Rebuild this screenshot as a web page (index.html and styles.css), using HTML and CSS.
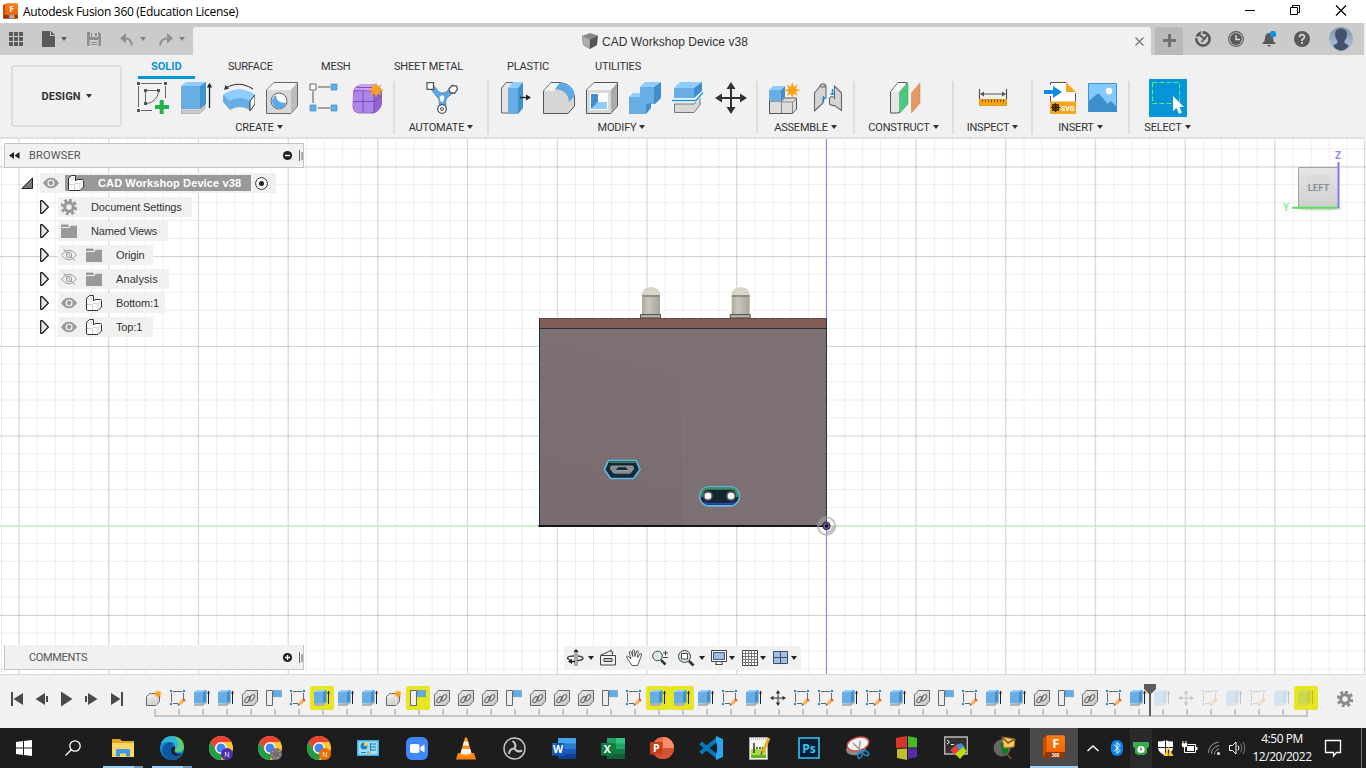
FILE: index.html
```html
<!DOCTYPE html>
<html lang="en">
<head>
<meta charset="utf-8">
<title>Autodesk Fusion 360 (Education License)</title>
<link rel="stylesheet" href="styles.css">
</head>
<body>
<svg class="defs" aria-hidden="true">
  <defs>
    <linearGradient id="led" x1="0" x2="1" y1="0" y2="0"><stop offset="0" stop-color="#aaa89f"/><stop offset=".35" stop-color="#c8c6bd"/><stop offset="1" stop-color="#a5a39b"/></linearGradient>
    <linearGradient id="gray" x1="0" x2="1" y1="0" y2="1"><stop offset="0" stop-color="#f0f0f0"/><stop offset="1" stop-color="#c4c4c4"/></linearGradient>
    <linearGradient id="wall" x1="0" x2=".2" y1="1" y2="0"><stop offset="0" stop-color="#796c71"/><stop offset="1" stop-color="#7d7072"/></linearGradient>
    <linearGradient id="cube" x1="0" x2="0" y1="0" y2="1"><stop offset="0" stop-color="#e6e6e6"/><stop offset="1" stop-color="#cfcfcf"/></linearGradient>
    <linearGradient id="fus" x1="0" x2="0" y1="0" y2="1"><stop offset="0" stop-color="#ff7a16"/><stop offset="1" stop-color="#f36400"/></linearGradient>
    <linearGradient id="ava" x1="0" x2="0" y1="0" y2="1"><stop offset="0" stop-color="#8295aa"/><stop offset="1" stop-color="#b0c8e8"/></linearGradient>
  </defs>

  <symbol id="star" viewBox="0 0 16 16"><path fill="#f9a11b" d="M8 0l1.500 4.500L13.600 2.400 11.500 6.500 16 8l-4.500 1.500 2.100 4.100-4.100-2.100L8 16l-1.500-4.500-4.100 2.100 2.100-4.100L0 8l4.500-1.500-2.100-4.100 4.100 2.100z"/></symbol>

  <symbol id="extrude" viewBox="0 0 32 32">
    <path fill="#ccc" stroke="#999" stroke-width=".6" d="M1.500 28h18L25 22.500V27l-5.500 4.500h-18z"/>
    <path fill="#68aee4" d="M1 4h19v23H1z"/><path fill="#8dcdff" d="M1 4l5-4h20l-6 4z"/><path fill="#3f92cf" d="M20 4l6-4v22l-6 5z"/>
    <path d="M29.500 4v22" stroke="#222" stroke-width="1.300"/><path fill="#222" d="M26.800 5.500l2.700-4.700 2.700 4.700z"/>
  </symbol>
  <symbol id="extrude-s" viewBox="0 0 16 16">
    <path fill="#bbb" stroke="#999" stroke-width=".5" d="M.5 14H9l3.500-3v1.700L9 15.700H.5z"/>
    <path fill="#68aee4" d="M0 2h9v11.500H0z"/><path fill="#8dcdff" d="M0 2l3-2h10L9 2z"/><path fill="#3f92cf" d="M9 2l3.500-2v11L9 13.500z"/>
    <path d="M14.500 2v12" stroke="#222"/><path fill="#222" d="M13 3.500l1.500-3 1.500 3z"/>
  </symbol>
  <symbol id="sketch" viewBox="0 0 16 16">
    <path d="M3 1.500h9M1.500 3v9M13.500 3v6M3 13.500h5" fill="none" stroke="#666"/>
    <path fill="#1184e8" d="M0 0h2v2H0zM13 0h2v2h-2zM0 13h2v2H0z"/>
    <path d="M9.300 14.200l4.200-4" stroke="#f5b04a" stroke-width="3"/><path d="M13.200 10.700L14.800 9.200" stroke="#ef5350" stroke-width="3"/><path fill="#555" d="M7.500 15.800l.8-2.400 1.700 1.600z"/>
  </symbol>
  <symbol id="link" viewBox="0 0 16 16">
    <path fill="url(#gray)" stroke="#666" d="M.5 5l4-4.500h11v10.500l-4 4.500H.5z"/>
    <g fill="none" stroke="#666" stroke-width="1.100"><ellipse cx="5.500" cy="9.500" rx="1.900" ry="3.700" transform="rotate(38 5.500 9.500)"/><ellipse cx="9.800" cy="7.800" rx="1.900" ry="3.700" transform="rotate(38 9.800 7.800)"/></g>
  </symbol>
  <symbol id="flange" viewBox="0 0 16 16"><path fill="#eee" stroke="#666" d="M.5.5h6v15h-6z"/><path fill="#61ade6" stroke="#418fc7" stroke-width=".5" d="M7 .5h8.700v6.200H7z"/></symbol>
  <symbol id="newc" viewBox="0 0 16 16"><path fill="url(#gray)" stroke="#666" d="M.5 8q0-2 2-3.500 1-1 3-1h8v8l-3.500 4H.5z"/><path fill="none" stroke="#fff" stroke-width=".7" d="M1 7h9v8M10 7l3-3"/><use href="#star" x="7.500" y="-.5" width="9" height="9"/></symbol>
  <symbol id="move" viewBox="0 0 32 32"><path d="M16 4v24M4 16h24" stroke="#333" stroke-width="2"/><path fill="#333" d="M16 0l4.500 7h-9zM16 32l4.500-7h-9zM0 16l7-4.500v9zM32 16l-7-4.500v9z"/></symbol>
  <symbol id="comp" viewBox="0 0 16 16"><path fill="#fafafa" stroke="#333" stroke-linejoin="round" d="M.5 14.500V3.500l3-3h4V6L9 4.500h5.500q1 0 1 1V12L12 15.500H1.500q-1 0-1-1z"/><path fill="none" stroke="#c4c4c4" stroke-width=".7" d="M1 9.500h5.500M6.500 9v6M7 8.500h5l3-3M12 8.500V15M1 4h4l2-2.500"/></symbol>
  <symbol id="folder" viewBox="0 0 16 14"><path fill="#999" d="M0 .5h7L8.500 3H0zM0 4h8.500l1-2.300H16V14H0z"/></symbol>
  <symbol id="eye" viewBox="0 0 16 12"><path fill="#999" d="M0 6Q3.500.7 8 .7T16 6q-3.500 5.300-8 5.300T0 6z"/><circle cx="8" cy="6" r="3.600" fill="#eee"/><circle cx="8" cy="6" r="2.200" fill="#999"/></symbol>
  <symbol id="eyeoff" viewBox="0 0 16 12"><g fill="none" stroke="#999"><path d="M.5 6Q4 1.200 8 1.200T15.500 6Q12 10.800 8 10.800T.5 6z"/><circle cx="8" cy="6" r="2.600"/><path d="M2.500 0l11.500 12"/></g></symbol>
  <symbol id="gear" viewBox="0 0 16 16"><path fill="none" stroke="currentColor" stroke-width="3.200" stroke-dasharray="2.900 2.440" d="M8 1.200a6.800 6.800 0 1 1-.01 0z"/><circle cx="8" cy="8" r="4.300" fill="none" stroke="currentColor" stroke-width="3.200"/></symbol>
  <symbol id="tri" viewBox="0 0 9 14"><path fill="#e8e8e8" stroke="#222" stroke-width="1.300" stroke-linejoin="round" d="M.7.7h1.600L8.400 7l-6.100 6.300H.7z"/></symbol>
  <symbol id="fusion" viewBox="0 0 22 24"><path fill="#c74b00" d="M0 3l4-2v18l-4 4z"/><path fill="url(#fus)" d="M3.500 1Q4 .3 5 .3h15.500q1.500 0 1.500 1.500V17H3.500z"/><path fill="#8b3905" d="M3 17h19v4q0 2-1.500 2H0z"/><text x="12.800" y="13.300" font-size="13" font-weight="700" fill="#fff" text-anchor="middle">F</text><text x="12.500" y="21.500" font-size="4.500" font-weight="700" fill="#fff" text-anchor="middle">360</text></symbol>
  <symbol id="chrome" viewBox="0 0 24 24"><circle cx="12" cy="12" r="12" fill="#fcc934"/><path fill="#ea4335" d="M1.600 6A12 12 0 0 1 22.400 6H12a6 6 0 0 0-5.200 9z"/><path fill="#1e9e4a" d="M1.600 6l5.200 9A6 6 0 0 0 14 17.700L12 24A12 12 0 0 1 1.600 6z"/><circle cx="12" cy="12" r="5.800" fill="#fff"/><circle cx="12" cy="12" r="4.500" fill="#4285f4"/></symbol>
</svg>

<header class="titlebar">
  <svg class="applogo" viewBox="0 0 22 25"><use href="#fusion" width="22" height="24"/></svg>
  <span class="apptitle">Autodesk Fusion 360 (Education License)</span>
  <svg class="winbtns" viewBox="0 0 110 20" fill="none" stroke="#000"><path d="M5 10.500h10"/><path d="M50.500 7.500h7v7h-7zM52.500 7.500v-2h7v7h-2"/><path d="M96 5.500l10 10M106 5.500l-10 10" stroke-width="1.200"/></svg>
</header>

<div class="tabbar">
  <div class="quick">
    <svg width="14" height="14" viewBox="0 0 14 14" fill="#595959"><path d="M0 0h4v4H0zM5 0h4v4H5zM10 0h4v4h-4zM0 5h4v4H0zM5 5h4v4H5zM10 5h4v4h-4zM0 10h4v4H0zM5 10h4v4H5zM10 10h4v4h-4z"/></svg>
    <svg class="q-file" width="13" height="16" viewBox="0 0 13 16" fill="#595959"><path d="M0 0h8v5h5v11H0zM9 0l4 4H9z"/></svg><i class="caret c1"></i>
    <svg class="q-save" width="14" height="14" viewBox="0 0 14 14"><path fill="#8f8f8f" d="M0 0h12l2 2v12H0z"/><path fill="#ccc" d="M3 0h8v5H3zM2.500 8h9v6h-9z"/><path fill="#8f8f8f" d="M8 1h2v3H8zM4 10h6v1H4zM4 12h6v1H4zM4 1h1v4H4z"/></svg>
    <svg class="q-undo" width="14" height="13" viewBox="0 0 14 13"><path fill="none" stroke="#8f8f8f" stroke-width="2" d="M3 5.300Q11.500 4.500 11.800 12.500"/><path fill="#8f8f8f" d="M0 5.200L6 0v10.500z"/></svg><i class="caret c2"></i>
    <svg class="q-redo" width="14" height="13" viewBox="0 0 14 13"><path fill="none" stroke="#8f8f8f" stroke-width="2" d="M11 5.300Q1.500 4.500 1.200 12.500"/><path fill="#8f8f8f" d="M14 5.200L8 0v10.500z"/></svg><i class="caret c2"></i>
  </div>
  <div class="doctab">
    <svg width="16" height="16" viewBox="0 0 16 16"><path fill="#888" d="M0 3L8 0l8 2.500L8 6z"/><path fill="#b0b0b0" stroke="#777" stroke-width=".6" d="M.3 3.200L8 6v9.700L1.500 12z"/><path fill="#555" d="M16 2.500L8 6v10l7-4z"/></svg>
    <span>CAD Workshop Device v38</span>
    <svg class="tabclose" width="9" height="9" viewBox="0 0 9 9"><path d="M.5.500l8 8M8.500.5l-8 8" stroke="#777" stroke-width="1.300"/></svg>
  </div>
  <div class="plus"><svg width="13" height="13" viewBox="0 0 13 13"><path d="M6.500 0v13M0 6.500h13" stroke="#707070" stroke-width="3"/></svg></div>
  <div class="status">
    <svg width="16" height="16" viewBox="0 0 16 16"><circle cx="8" cy="8" r="6.600" fill="none" stroke="#595959" stroke-width="2.600"/><path d="M0 5.500l5 2.500M7 0L6 5" stroke="#cbcbcb" stroke-width="1.500"/><path d="M4 3.500L9.500 8 12 4.500M9.500 7.500L6.500 11" fill="none" stroke="#595959" stroke-width="1.800"/></svg>
    <svg width="16" height="16" viewBox="0 0 16 16"><circle cx="8" cy="8" r="7.400" fill="none" stroke="#595959" stroke-width="1.100"/><circle cx="8" cy="8" r="5.900" fill="#595959"/><path d="M8 4v4.500h4" fill="none" stroke="#ddd" stroke-width="1.400"/></svg>
    <svg width="16" height="16" viewBox="0 0 16 16"><path fill="#595959" d="M2 12q2-1.500 2-5 0-4.500 4-5 4 .5 4 5 0 3.500 2 5zM1.500 11.500h13V13h-13zM6 14h4l-2 2z"/><circle cx="12" cy="3" r="3.200" fill="#0a96dc"/></svg>
    <svg width="16" height="16" viewBox="0 0 16 16"><circle cx="8" cy="8" r="8" fill="#595959"/><path d="M5.500 6.300Q5.700 3.700 8 3.700t2.400 2.200Q10.400 7.300 8 8.700V10M8 11v2" fill="none" stroke="#d5d5d5" stroke-width="1.800"/></svg>
  </div>
  <svg class="avatar" width="24" height="24" viewBox="0 0 24 24"><circle cx="12" cy="12" r="12" fill="url(#ava)"/><path fill="#44536a" d="M12 1.500q6 .5 6 6 0 4-2.500 6.500v2l4.500 2.500q-3 5-8 5.200-5-.2-8-5.200L8.500 16v-2Q6 11.500 6 7.500q0-5.500 6-6z"/></svg>
</div>

<section class="ribbon">
  <div class="design">DESIGN<i class="caret"></i></div>
  <div class="tools">
    <nav class="tabs"><span class="on t1">SOLID</span><span class="t2">SURFACE</span><span class="t3">MESH</span><span class="t4">SHEET METAL</span><span class="t5">PLASTIC</span><span>UTILITIES</span></nav>
    <div class="groups">
      <div class="group g-create"><div class="icons">
        <svg viewBox="0 0 32 32"><path d="M4 1.500h21M1.500 4v21M28.500 4v12M4 28.500h11" stroke="#666"/><path fill="#555" d="M0 0h3v3H0zM27 0h3v3h-3zM0 27h3v3H0zM7 7h3v3H7zM20 7h3v3h-3zM7 20h3v3H7z"/><path d="M8.500 10v10M10 8.500h10M21.500 10q-1 9-12 12" fill="none" stroke="#666"/><path d="M24.700 18v14M18 25h14" stroke="#22b14c" stroke-width="4"/></svg>
        <svg viewBox="0 0 32 32"><use href="#extrude"/></svg>
        <svg viewBox="0 0 32 32"><path fill="#68aee4" d="M0 13Q16 2 32 13v8q0 0-5 7-11-6-20 0l-7-8z"/><path fill="#8dcdff" d="M0 13Q16 2 32 13l-5 6q-11-6-20 0z"/><path d="M27 19l5-6v9l-5 7z" fill="#fff" stroke="#333"/><path d="M3 6Q16-2 30 7" fill="none" stroke="#333" stroke-width="1.200"/><path fill="#333" d="M1 8l1.500-5L6 6.500z"/></svg>
        <svg viewBox="0 0 32 32"><path fill="#d9d9d9" stroke="#666" d="M.5 8L8 .500h23.500V24L25 31.500H.5z"/><path fill="#f4f4f4" d="M1 8l7-7h23l-6 7z"/><path fill="#bbb" d="M25 8l6-7v23l-6 7z"/><circle cx="13" cy="19" r="8" fill="#fff" stroke="#666"/><path fill="#5ca9e6" d="M10 13q0 8 10 8-1 5.500-7 5.500-6.500-.5-7-7 0-4 4-6.500z"/></svg>
        <svg viewBox="0 0 32 32"><path d="M9 5h12M4 9v12M9 26h12" stroke="#555"/><path fill="#fff" stroke="#666" d="M1 2h6v6H1z"/><path fill="#62aee8" stroke="#3f8ec8" stroke-width=".7" d="M22 2h6v6h-6zM1 23h6v6H1zM22 23h6v6h-6z"/></svg>
        <svg viewBox="0 0 32 32"><path fill="#9362cf" d="M1 10q1-7 10-8h10q8 1 9 8v12q-1 6-8 9.500H7q-6-1-6.500-7z"/><path fill="#c9a4f7" d="M2 8q4-5 9-6h9q5 1 6 3l-5 4q-10-2-19-1z"/><path fill="#ad85e6" d="M1.500 10.500Q11 7 21.500 10.500q1.500 9 0 19.500-10 2-19 0-2.500-10-1-19.500z"/><path d="M11 9v22M1 19.500h21l8-6M5 5.500h20M22 10v20" fill="none" stroke="#7049a9" stroke-width=".9"/><use href="#star" x="16" y="0" width="16" height="16"/></svg>
      </div><div class="label">CREATE<i class="caret"></i></div></div>
      <div class="group g-auto"><div class="icons">
        <svg viewBox="0 0 32 32"><path fill="#5da8e2" stroke="#35729f" stroke-width=".6" d="M4 6l4-2 5 6q3 2 7 0l5-5 3 5-6 5q-3 2-2 10l-2 3h-3l-2-3q1-8-2-10z"/><path d="M16 13l-2.500 2 1.500 5h2l1.500-5z" fill="#fff"/><path fill="#fff" stroke="#555" stroke-width="1.300" d="M1 .7h6.500v6.600H1zM26 3.500l4.500.5 1 3-3 4.500-4.500-1-1-3.500z"/><circle cx="16" cy="27" r="4.300" fill="#fff" stroke="#555" stroke-width="1.300"/><circle cx="16" cy="27" r="1.500" fill="none" stroke="#444"/></svg>
      </div><div class="label">AUTOMATE<i class="caret"></i></div></div>
      <div class="group g-modify"><div class="icons">
        <svg viewBox="0 0 32 32"><path fill="#e4e4e4" stroke="#666" d="M1.500 31V6L6 .5h9V26l-5 5z"/><path fill="#68aee4" d="M8 6h10v26H8z"/><path fill="#8dcdff" d="M8 6l5-6h10l-5 6z"/><path fill="#3f92cf" d="M18 6l5-6v26l-5 6z"/><path d="M20 15.500h7" stroke="#222" stroke-width="1.400"/><path fill="#222" d="M26 12.500l5 3-5 3z"/></svg>
        <svg viewBox="0 0 32 32"><path fill="#d6d6d6" stroke="#555" d="M.5 31.500V9L8 .5h9Q30 2 31.500 15v9L25 31.500z"/><path fill="#f2f2f2" d="M1 9l7-8h9l-6 8z"/><path fill="#5da9e4" d="M12 7l5-6.500Q31 2 31.500 14L26 20Q25 8 12 7z"/></svg>
        <svg viewBox="0 0 32 32"><path fill="#d9d9d9" stroke="#555" d="M.5 8L8 .500h23.500V24L25 31.500H.5z"/><path fill="#f4f4f4" d="M1 8l7-7h23l-6 7z"/><path fill="#aaa" d="M25 8l6-7v23l-6 7z"/><path fill="#fff" d="M4 11h18v17H4z"/><path fill="#8dcdff" d="M5 27l7-7h9v7z"/><path fill="#3f8ecb" d="M5 12h7v8l-7 7z"/></svg>
        <svg viewBox="0 0 32 32"><path fill="#68aee4" d="M0 15h11V5h14v17h-8v10H0z"/><path fill="#8dcdff" d="M0 15l4-4h7v4zM11 5l5-5h16l-7 5z"/><path fill="#3f8ecb" d="M25 5l7-5v16l-6 6h-8l4-1v5l-5 6V22h8z"/></svg>
        <svg viewBox="0 0 32 32"><path fill="#68aee4" d="M2 6h20v10H2z"/><path fill="#8dcdff" d="M2 6l6-6h22l-8 6z"/><path fill="#3f8ecb" d="M22 6l8-6v9l-8 7z"/><path fill="#d8d8d8" stroke="#777" d="M2.500 22H22l6-6v7l-6 7.500H2.500z"/><path d="M0 18.500h24l7-8" fill="none" stroke="#fff" stroke-width="3"/><path d="M0 18.500h24l7-8" fill="none" stroke="#0f93e6" stroke-width="1.400"/></svg>
        <svg viewBox="0 0 32 32"><use href="#move"/></svg>
      </div><div class="label">MODIFY<i class="caret"></i></div></div>
      <div class="group g-asm"><div class="icons">
        <svg viewBox="0 0 32 32"><path fill="#ddd" stroke="#555" d="M.5 19h12l3-3h12v11l-4 4.500H.5z"/><path d="M12.500 19v12M23.500 20v11M13 20h11l4-4" stroke="#888" fill="none"/><path fill="#68aee4" d="M0 8h12v11H0z"/><path fill="#8dcdff" d="M0 8l4-4h12l-4 4z"/><path fill="#3f8ecb" d="M12 8l4-4v11l-4 4z"/><use href="#star" x="15" y="0" width="16.500" height="16.500"/></svg>
        <svg viewBox="0 0 32 32"><g fill="#d4d4d4" stroke="#666" stroke-width="1.100"><path d="M2.500 11L8 4q4-4 6 0v12l-3 1v4L2.500 29z"/><path d="M29.500 11L22.500 4v12q-3-3-5 0v6q2 2 5 1.500l7 5z"/><ellipse cx="11" cy="3.500" rx="2.500" ry="1.500"/></g><path d="M11.500 14v6M20.500 7v6M18.500 12h4" stroke="#118ce6" stroke-width="1.400"/></svg>
      </div><div class="label">ASSEMBLE<i class="caret"></i></div></div>
      <div class="group g-con"><div class="icons">
        <svg viewBox="0 0 32 32"><path fill="#e6e6e6" stroke="#555" d="M1.500 31V10L9 .5h8.500V22L9 31z"/><path fill="#f7f7f7" d="M2 10l7-9h8l-7 9z"/><path fill="#4fc57e" stroke="#37a965" stroke-width=".5" d="M10.500 31.500V10L19 .5V22z"/><path fill="#e69763" stroke="#ca7b49" stroke-width=".5" d="M22.500 31V11L31 1v20z"/></svg>
      </div><div class="label">CONSTRUCT<i class="caret"></i></div></div>
      <div class="group g-ins"><div class="icons">
        <svg viewBox="0 0 32 32"><path d="M2.500 7v10M29.500 7v10M5 12h22" stroke="#555" stroke-width="1.200"/><path fill="#555" d="M3 12l4-2.500v5zM29 12l-4-2.500v5z"/><path fill="#fba300" stroke="#d98a00" stroke-width=".7" d="M2.500 17.500h27v6h-27z"/><path d="M5.500 17.500v2.500M8.500 17.500v2.500M11.500 17.500v2.500M14.500 17.500v3M17.500 17.500v2.500M20.500 17.500v2.500M23.500 17.500v2.500M26.500 17.500v3" stroke="#7c4f00"/></svg>
      </div><div class="label">INSPECT<i class="caret"></i></div></div>
      <div class="group g-insert"><div class="icons">
        <svg viewBox="0 0 32 32"><path fill="#fff" d="M6 0h16l10 10v10H6z"/><path d="M6.500 3V.500H22M6.500 14v6M31.500 11v9" fill="none" stroke="#555"/><path fill="#f5a81f" d="M22 0l10 10H22zM6 19.500h26V32H6z"/><path fill="#128be6" d="M0 8h9V4l9 6-9 6v-4H0z"/><circle cx="11.500" cy="25.500" r="3" fill="none" stroke="#3b2600" stroke-width="1.300"/><path d="M11.500 21v9M7 25.500h9M8.300 22.300l6.400 6.400M14.700 22.300l-6.400 6.400" stroke="#3b2600" stroke-width="1.200"/><text x="17" y="28.800" font-size="8" font-weight="700" fill="#fff" textLength="13.500" lengthAdjust="spacingAndGlyphs">SVG</text></svg>
        <svg viewBox="0 0 32 32"><path fill="#84caff" stroke="#3e93d2" d="M1.500 1.500h28v28h-28z"/><path fill="#3d8fcd" d="M2 19l8-7q2-1 4 2l7 8q2-4 4-2l5 5v5H2z"/><circle cx="22" cy="9" r="3.200" fill="#fffbe0"/></svg>
      </div><div class="label">INSERT<i class="caret"></i></div></div>
      <div class="group g-sel"><div class="icons">
        <svg class="big" viewBox="0 0 38 38"><path fill="#0696d7" d="M0 0h38v38H0z"/><path d="M3.500 3.500h27v21h-27z" fill="none" stroke="#62e38e" stroke-dasharray="5 2"/><path fill="#fff" d="M24 17v15l3.500-3 2.500 6 3-1.500-2.500-5.500H35z"/></svg>
      </div><div class="label">SELECT<i class="caret"></i></div></div>
    </div>
  </div>
</section>

<main class="stage">
  <svg class="scene" viewBox="0 139 1366 535">
    <path d="M.98 406.500H1366" stroke="#000" stroke-opacity=".065" stroke-width="535" stroke-dasharray="1 16.940"/>
    <path d="M683 148.240V674" stroke="#000" stroke-opacity=".065" stroke-width="1366" stroke-dasharray="1 16.940"/>
    <path d="M18.400 406.500H1366" stroke="#000" stroke-opacity=".13" stroke-width="535" stroke-dasharray="1 88.700"/>
    <path d="M683 166.500V674" stroke="#000" stroke-opacity=".13" stroke-width="1366" stroke-dasharray="1 88.700"/>
    <path d="M0 526H1366" stroke="#c5f6c5" stroke-width="1.500"/><path d="M826.500 139V674" stroke="#8a84f2"/>
    <g id="led1"><path fill="url(#led)" d="M642 314v-18q0-8.500 9-8.500t9 8.500v18z"/><path d="M642 296h18" stroke="#858379" stroke-width="1.500"/><path fill="#d8d4c8" d="M642.500 295q0-7.500 8.500-7.500t8.500 7.500z"/><path fill="#aeada4" stroke="#55564f" d="M640.500 314.500h20v3.500h-20z"/></g>
    <use href="#led1" x="89.700"/>
    <path fill="url(#wall)" d="M539.500 328H683v198H539.500z"/><path fill="#7d7072" d="M683 328h143.500v198H683z"/><path d="M683.500 329v196" stroke="#81767a" stroke-opacity=".5"/>
    <path fill="#835c57" d="M539.500 318.500H826V328H539.500z"/>
    <path d="M539.500 318v208M826.500 318v208M539 328.500h287" stroke="#203541" fill="none"/><path d="M539 318.500h288" stroke="#614b43" stroke-width="1"/><path d="M538.500 526H826" stroke="#111619" stroke-width="2"/>
    <path fill="#152a36" stroke="#5cb9e4" stroke-width="1.700" d="M608.500 460.500h27.500l4 9-6.500 9h-23l-6-9z"/><path d="M609.500 462.300h26" stroke="#398462" stroke-width="1.500"/><path fill="#839095" stroke="#09151d" stroke-width=".7" d="M609.500 467l2-2h21l2 2v2l-3.500 4.500q-1 .7-2 .7h-14q-1.500 0-2-.7l-3.500-4.500z"/><path fill="#1b2a30" d="M616 470l2-2.700h8l2 2.700z"/><path d="M617 470.500h11" stroke="#b2b2a8" stroke-width=".7"/>
    <rect x="699.500" y="486.800" width="40" height="19" rx="9.500" fill="#142630" stroke="#5cb9e4" stroke-width="1.800"/><path d="M702 497v-3q1-5.500 6-5.500h23q5 0 6 5.500v3" fill="none" stroke="#3c8e65" stroke-width="2.400"/><path d="M704 502q2 1.800 5 1.800h21q3 0 5-1.800" fill="none" stroke="#3045a7" stroke-width="2"/><circle cx="708" cy="496" r="4.800" fill="#626568"/><circle cx="731" cy="496" r="4.800" fill="#626568"/><circle cx="708" cy="496" r="3.300" fill="#f4f4f4"/><circle cx="731" cy="496" r="3.300" fill="#f4f4f4"/>
    <g fill="none" stroke="#a0a0a0"><circle cx="826.500" cy="526" r="8.700" stroke-opacity=".65" stroke-width="2"/><path d="M826.500 520v-3M833 526h3" stroke="#fff" stroke-width="0"/><path d="M826.500 532.500a6.500 6.500 0 0 0 6.500-6.500M826.500 519.500a6.500 6.500 0 0 0-6.500 6.500" stroke-opacity=".65" stroke-width="2.500"/><circle cx="826.500" cy="526" r="3.700" fill="#7655a7" stroke="#292236"/></g><circle cx="826.500" cy="526" r="1.700" fill="#111"/>
    <ellipse cx="1319" cy="208.500" rx="23" ry="2" fill="#000" opacity=".15"/><path fill="url(#cube)" stroke="#a2a2a2" d="M1298.500 167.500h40v40h-40z"/><path fill="#d6d8db" opacity=".7" d="M1306 175h24v24h-24z"/><text x="1318.500" y="191" class="cubetext">LEFT</text><path d="M1292 207.700h46" stroke="#5be05b" stroke-width="2"/><path d="M1338.500 162v46" stroke="#807bf5" stroke-width="2"/><text x="1338" y="159" class="axis z">Z</text><text x="1286" y="210.500" class="axis y">Y</text>
  </svg>

  <aside class="browser">
    <div class="panelhead"><svg width="11" height="7" viewBox="0 0 11 7"><path fill="#222" d="M0 3.500L5 0v7zM5.500 3.500l5-3.500v7z"/></svg><span>BROWSER</span><svg class="ctl" width="21" height="13" viewBox="0 0 21 13"><circle cx="5.500" cy="6.500" r="4.600" fill="#222"/><path d="M3 6.500h5" stroke="#fff" stroke-width="1.400"/><path d="M17.500 1v11M20 3v8" stroke="#666"/></svg></div>
    <div class="node root"><svg width="12" height="12" viewBox="0 0 12 12"><path fill="#777" stroke="#222" d="M.8 11.500L11.500.8v10.700z"/></svg><div class="chip"><svg width="16" height="12"><use href="#eye"/></svg><b><svg width="16" height="16"><use href="#comp"/></svg><em>CAD Workshop Device v38</em></b><svg class="radio" width="13" height="13" viewBox="0 0 13 13"><circle cx="6.500" cy="6.500" r="5.900" fill="#fff" stroke="#333"/><circle cx="6.500" cy="6.500" r="2.500" fill="#222"/></svg></div></div>
    <div class="node"><svg class="tri"><use href="#tri"/></svg><div class="chip w1"><svg class="dim" width="16" height="16"><use href="#gear"/></svg><span>Document Settings</span></div></div>
    <div class="node"><svg class="tri"><use href="#tri"/></svg><div class="chip w2"><svg width="16" height="14"><use href="#folder"/></svg><span>Named Views</span></div></div>
    <div class="node"><svg class="tri"><use href="#tri"/></svg><div class="chip w3"><svg width="16" height="12"><use href="#eyeoff"/></svg><svg class="second" width="16" height="14"><use href="#folder"/></svg><span>Origin</span></div></div>
    <div class="node"><svg class="tri"><use href="#tri"/></svg><div class="chip w4"><svg width="16" height="12"><use href="#eyeoff"/></svg><svg class="second" width="16" height="14"><use href="#folder"/></svg><span class="wide">Analysis</span></div></div>
    <div class="node"><svg class="tri"><use href="#tri"/></svg><div class="chip w5"><svg width="16" height="12"><use href="#eye"/></svg><svg class="second" width="16" height="16"><use href="#comp"/></svg><span>Bottom:1</span></div></div>
    <div class="node"><svg class="tri"><use href="#tri"/></svg><div class="chip w3"><svg width="16" height="12"><use href="#eye"/></svg><svg class="second" width="16" height="16"><use href="#comp"/></svg><span>Top:1</span></div></div>
  </aside>

  <div class="comments panelhead"><span>COMMENTS</span><svg class="ctl" width="21" height="13" viewBox="0 0 21 13"><circle cx="5.500" cy="6.500" r="4.600" fill="#222"/><path d="M3 6.500h5M5.500 4v5" stroke="#fff" stroke-width="1.300"/><path d="M17.500 1v11M20 3v8" stroke="#666"/></svg></div>

  <svg class="navbar" viewBox="564 646 237 24" fill="none" stroke="#444">
    <path fill="#f1f1f1" stroke="none" d="M564 646h237v24H564z"/>
    <path d="M575 650v16M577 650v16" stroke-width=".8"/><path d="M574 656q-6 0-6.500 2 0 1.500 4 2.500M578 656q5 .5 5 2.500-.5 2-6 2" stroke-width="1.400"/><path fill="#222" stroke="none" d="M568 661.500l4-2.500v5zM572 660.800h3v1.400h-3zM573.500 652l2.500-3 2.500 3zM588 656h6l-3 4zM699 656h6l-3 4zM729 656h6l-3 4zM760 656h6l-3 4zM791 656h6l-3 4z"/>
    <path d="M600.500 655.500h15v9.500h-15zM601 655l7-3 3-2v2h2l-1 3" fill="#eee"/><path d="M604 658.500h8v3h-8z" fill="#bcc6cf"/>
    <path fill="#fff" stroke-linejoin="round" stroke-width=".9" d="M632 665.500l-5.500-8.500q.5-2 2.500 0l2 2-1.800-7q1-1.500 2 0l1.600 4.500-.3-6q1-1.500 2 0l.5 6 1.500-5.500q1.500-1 1.700.8l-.7 6 2.500-4q2-.5 1.500 1.200L639 662l-1.500 3.500z"/>
    <circle cx="657.500" cy="656" r="4.800" fill="#d8e8e8"/><path d="M661 660l4.500 4.500" stroke="#333" stroke-width="2.500"/><path d="M663 653h5M665.500 650.500v5M663 657.500h5"/>
    <circle cx="684.500" cy="656.500" r="6" fill="#d5e2e4"/><path d="M681.500 653.500h6v5.500h-6z" fill="#fff"/><path d="M689 661l4.500 4.500" stroke="#333" stroke-width="2.700"/>
    <path fill="#fff" d="M711.500 650.500h15v11h-15zM715.500 664.500h7l-1-3h-5z"/><path fill="#9fbbdf" stroke="#345b87" d="M713.500 652.500h11v7h-11z"/>
    <path fill="#fff" d="M742.500 650.500h15v15h-15z"/><path d="M742.500 653.500h15M742.500 656.500h15M742.500 659.500h15M742.500 662.500h15M745.500 650.500v15M748.500 650.500v15M751.500 650.500v15M754.500 650.500v15" stroke="#777"/>
    <path fill="#a9bfe0" stroke="#334f75" d="M773.500 651.500h7v6h-7zM780.500 651.500h7v6h-7zM773.500 657.500h7v6h-7zM780.500 657.500h7v6h-7z"/>
  </svg>
</main>

<section class="timeline">
  <svg class="playback" viewBox="10 690 115 18" fill="#4a4a4a"><path d="M11 692h2v14h-2zM23 693v12l-9.500-6zM45 693v12l-9.500-6zM46 696h2v6h-2zM61 691.500v15l11.500-7.500zM85 696h2v6h-2zM88 693v12l9.500-6zM111 693v12l9.500-6zM121 692h2v14h-2z"/></svg>
  <div class="track">
    <i><svg><use href="#newc"/></svg></i><i><svg><use href="#sketch"/></svg></i><i><svg><use href="#extrude-s"/></svg></i><i><svg><use href="#extrude-s"/></svg></i><i><svg><use href="#link"/></svg></i><i><svg><use href="#flange"/></svg></i><i><svg><use href="#sketch"/></svg></i>
    <i class="hl"><svg><use href="#extrude-s"/></svg></i><i><svg><use href="#extrude-s"/></svg></i><i><svg><use href="#extrude-s"/></svg></i><i><svg><use href="#newc"/></svg></i><i class="hl"><svg><use href="#flange"/></svg></i><i><svg><use href="#link"/></svg></i><i><svg><use href="#link"/></svg></i>
    <i><svg><use href="#link"/></svg></i><i><svg><use href="#flange"/></svg></i><i><svg><use href="#link"/></svg></i><i><svg><use href="#link"/></svg></i><i><svg><use href="#link"/></svg></i><i><svg><use href="#flange"/></svg></i><i><svg><use href="#sketch"/></svg></i>
    <i class="hl"><svg><use href="#extrude-s"/></svg></i><i class="hl"><svg><use href="#extrude-s"/></svg></i><i><svg><use href="#extrude-s"/></svg></i><i><svg><use href="#sketch"/></svg></i><i><svg><use href="#extrude-s"/></svg></i><i><svg><use href="#move"/></svg></i><i><svg><use href="#sketch"/></svg></i>
    <i><svg><use href="#sketch"/></svg></i><i><svg><use href="#extrude-s"/></svg></i><i><svg><use href="#sketch"/></svg></i><i><svg><use href="#extrude-s"/></svg></i><i><svg><use href="#link"/></svg></i><i><svg><use href="#flange"/></svg></i><i><svg><use href="#sketch"/></svg></i>
    <i><svg><use href="#extrude-s"/></svg></i><i><svg><use href="#extrude-s"/></svg></i><i><svg><use href="#link"/></svg></i><i><svg><use href="#flange"/></svg></i><i><svg><use href="#link"/></svg></i><i><svg><use href="#sketch"/></svg></i><i><svg><use href="#extrude-s"/></svg></i>
    <i class="off"><svg><use href="#extrude-s"/></svg></i><i class="off"><svg><use href="#move"/></svg></i><i class="off"><svg><use href="#sketch"/></svg></i><i class="off"><svg><use href="#extrude-s"/></svg></i><i class="off"><svg><use href="#sketch"/></svg></i><i class="off"><svg><use href="#extrude-s"/></svg></i><i class="off hl"><svg><use href="#extrude-s"/></svg></i>
    <svg class="marker" viewBox="0 0 12 32"><path fill="#5c5c5c" d="M0 0h12v5L7 10v22H5V10L0 5z"/></svg>
  </div>
  <svg class="cog" width="16" height="16"><use href="#gear"/></svg>
</section>

<footer class="taskbar">
  <div class="app s"><svg width="16" height="16" viewBox="0 0 16 16" fill="#fff"><path d="M0 2l7-1v6.500H0zM8 1l8-1v7.500H8zM0 8.500h7V15l-7-1zM8 8.500h8V16l-8-1z"/></svg></div>
  <div class="app s2"><svg width="16" height="16" viewBox="0 0 16 16" fill="none" stroke="#fff" stroke-width="1.300"><circle cx="10" cy="6" r="5.200"/><path d="M6.300 9.700L.5 15.500"/></svg></div>
  <div class="app run"><svg width="22" height="20" viewBox="0 0 22 20"><path fill="#e5a51e" d="M0 1h8l2 2h12v5H0z"/><path fill="#ffd766" d="M0 5h22v14H0z"/><path fill="#3d9be0" d="M4 18.500v-6q0-1.500 1.500-1.500h11q1.500 0 1.500 1.500v6h-4v-3H8v3z"/></svg></div>
  <div class="app run"><svg width="24" height="24" viewBox="0 0 24 24"><circle cx="12" cy="12" r="12" fill="#1687d0"/><path fill="#34b5d5" d="M1 8Q4 0 12 0q11 .5 12 11 0 5-6 5-5 0-3-4 1-5-5-6-5-1-9 2z"/><path fill="#62d65a" d="M14 0q10 2 10 11 0 5-6 5-3 0-4-1 9-5 0-15z" opacity=".8"/><path fill="#0c58a5" d="M9 6q-7 2-7 10 2 6 9 8 7 1 11-5-11 3-11-6 0-4 3-5-2-2-5-2z"/><path fill="#1d1d1d" d="M15 13q-2 4 3 5 3 0 5-1-3 3-7 3-6-2-5-7 1-3 3-3 2 1 1 3z"/></svg></div>
  <div class="app"><svg width="26" height="26" viewBox="0 0 26 26"><use href="#chrome" width="24" height="24" x="1" y="1"/><circle cx="19" cy="19" r="6" fill="#512da8"/><text x="19" y="21.500" class="ini">N</text></svg></div>
  <div class="app"><svg width="26" height="26" viewBox="0 0 26 26"><use href="#chrome" width="24" height="24" x="1" y="1"/><circle cx="19" cy="19" r="6" fill="#756b70"/><circle cx="19" cy="19" r="4" fill="none" stroke="#a8928b" stroke-width="2" stroke-dasharray="1.500 2"/></svg></div>
  <div class="app"><svg width="26" height="26" viewBox="0 0 26 26"><use href="#chrome" width="24" height="24" x="1" y="1"/><circle cx="19" cy="19" r="6" fill="#ef6c00"/><text x="19" y="21.500" class="ini">N</text></svg></div>
  <div class="app"><svg width="22" height="16" viewBox="0 0 22 16"><path fill="#9ee0fb" stroke="#3daee8" stroke-width="1.400" d="M.7.7h20.600v14.600H.7z"/><circle cx="7" cy="6" r="3.500" fill="#1b83c9"/><path fill="#ffc343" d="M7 2a4 4 0 0 1 4 4H7z"/><path d="M13 4h6M13 7h6M13 10h6M13.500 3v8M4 12.500h5" stroke="#2277ad"/><path d="M10 12.500h3" stroke="#eb961c" stroke-width="2"/></svg></div>
  <div class="app"><svg width="22" height="23" viewBox="0 0 22 23"><rect width="22" height="23" rx="6" fill="#4087fc"/><rect x="4" y="7" width="9.500" height="9" rx="2" fill="#fff"/><path fill="#fff" d="M14.500 10l4-2.500v8l-4-2.500z"/></svg></div>
  <div class="app"><svg width="20" height="23" viewBox="0 0 20 23"><path fill="#f5820b" d="M2 16h16l2 6.500H0z"/><path fill="#ff970f" d="M9 .5h2L16 18q-6 3-12 0z"/><path fill="#f3f3f3" d="M8 4.500h4l1.200 4H6.800zM5.700 12h8.600l1.200 4.500q-5.500 2-11 0z"/></svg></div>
  <div class="app"><svg width="23" height="23" viewBox="0 0 23 23" fill="none" stroke="#c8c8c8"><circle cx="11.500" cy="11.500" r="10.500" fill="#242424" stroke-width="1.400"/><path id="blade" d="M11.500 11.500Q14 7 9.500 4" stroke-width="2"/><path d="M11.500 11.500Q14 7 9.500 4" stroke-width="2" transform="rotate(120 11.500 11.500)"/><path d="M11.500 11.500Q14 7 9.500 4" stroke-width="2" transform="rotate(240 11.500 11.500)"/></svg></div>
  <div class="app"><svg width="24" height="21" viewBox="0 0 24 21"><path fill="#2b7cd3" d="M6 0h18v21H6z"/><path fill="#41a5ee" d="M6 0h18v5.500H6z"/><path fill="#185abd" d="M6 11h18v5H6z"/><path fill="#103f91" d="M6 16h18v5H6z"/><path fill="#185abd" d="M0 5h12.500v12.500H0z"/><text x="6.200" y="15" class="off-l">W</text></svg></div>
  <div class="app"><svg width="24" height="21" viewBox="0 0 24 21"><path fill="#21a366" d="M6 0h18v21H6z"/><path fill="#33c481" d="M15 0h9v5.500h-9z"/><path fill="#107c41" d="M6 5.500h9V16H6zM15 11h9v5h-9z"/><path fill="#185c37" d="M6 16h18v5H6z"/><path fill="#107c41" d="M0 5h12.500v12.500H0z"/><text x="6.200" y="15" class="off-l">X</text></svg></div>
  <div class="app"><svg width="24" height="22" viewBox="0 0 24 22"><circle cx="13" cy="11" r="11" fill="#ed6c47"/><path fill="#ff8f6b" d="M13 0a11 11 0 0 1 11 11H13z"/><path fill="#d35230" d="M2 11h22a11 11 0 0 1-22 0z"/><path fill="#c43e1c" d="M0 5h12.500v12.500H0z"/><text x="6.200" y="15" class="off-l">P</text></svg></div>
  <div class="app"><svg width="24" height="24" viewBox="0 0 24 24"><path d="M1.500 7l17 14M1.500 17l17-14" stroke="#0878bd" stroke-width="4"/><path fill="#27a5ef" d="M17 0l7 3v18l-7 3z"/><path fill="#1e1e1e" d="M18 7v10l-6-5z"/></svg></div>
  <div class="app"><svg width="22" height="24" viewBox="0 0 22 24"><path fill="#f5f7ec" stroke="#aaa" d="M.5 1.500h18v22H.5z"/><path fill="#a9df40" d="M2 13h15v9H2z"/><path fill="#61b126" d="M2 19h15v3H2z"/><path d="M2 3h15" stroke="#999" stroke-dasharray="1 1"/><path d="M5 7v10M7 12h2M10 12h2M13 12h2" stroke="#333" stroke-width="1.500"/><path d="M20 2l-7 16" stroke="#f1ad23" stroke-width="3"/><path d="M13 15l-1 4" stroke="#444"/></svg></div>
  <div class="app"><svg width="22" height="22" viewBox="0 0 22 22"><path fill="#061e33" stroke="#35c5f4" stroke-width="1.600" d="M1 1h20v20H1z"/><text x="11" y="15.500" class="ps">Ps</text></svg></div>
  <div class="app"><svg width="24" height="24" viewBox="0 0 24 24"><ellipse cx="10" cy="13" rx="10" ry="6" fill="#888" transform="rotate(-10 10 13)"/><ellipse cx="12" cy="8" rx="11" ry="6.500" fill="#f4f4f4" stroke="#d84b4b" stroke-width="1.500" transform="rotate(-15 12 8)"/><path d="M7 7l9 9M14 5l-1 12" stroke="#999" stroke-width="1.500"/><g fill="none" stroke="#2282c4" stroke-width="1.600"><ellipse cx="14" cy="19" rx="2" ry="3.500" transform="rotate(20 14 19)"/><ellipse cx="19.500" cy="17" rx="2" ry="3.500" transform="rotate(-60 19.500 17)"/></g></svg></div>
  <div class="app"><svg width="22" height="24" viewBox="0 0 22 24"><path fill="#d8352c" d="M0 2l11-2v11.500L0 12z"/><path fill="#45b923" d="M12 0l9 2v9.500h-9z"/><path fill="#bebe2c" d="M1 13l10-.5V24L1 22z"/><path fill="#562aab" d="M12 12.500h9V21l-9 2z"/></svg></div>
  <div class="app"><svg width="24" height="24" viewBox="0 0 24 24"><path fill="#303030" stroke="#bbb" stroke-width="1.300" d="M.7 1h22.600v17H.7z"/><path d="M3 4l2.500 2L3 8M7 8.500h3" fill="none" stroke="#fff"/><path fill="#e3413c" d="M6 14l6-5 5 5-6 5z"/><path fill="#438edc" d="M12 9l5-2 4 4-5 4z"/><path fill="#b3df10" d="M11 18l8-7 4 4-7 8z"/></svg></div>
  <div class="app"><svg width="24" height="24" viewBox="0 0 24 24"><circle cx="9" cy="12" r="8.500" fill="#666"/><path fill="#0b7d25" d="M7 7h8v9l-5 3z"/><path fill="#ffcb5b" stroke="#9b7021" d="M9 1l13 2-1 8-10 1z"/><path d="M9 1l6 6 7-4M14 18l4 5" fill="none" stroke="#77551b" stroke-width="1.500"/></svg></div>
  <div class="app active"><svg width="22" height="24"><use href="#fusion"/></svg></div>
  <svg class="tray" viewBox="1078 728 288 40" fill="none" stroke="#fff">
    <path fill="#2a2a2a" stroke="none" d="M1130 729h22v39h-22z"/>
    <path d="M1087.500 751l5.500-5 5.500 5" stroke-width="1.400"/>
    <rect x="1111" y="740" width="12" height="16" rx="6" fill="#0a83ea" stroke="none"/><path d="M1114 744.500l6 6-3 3v-11l3 3-6 6" stroke-width="1"/>
    <path fill="#36ad4b" stroke="none" d="M1133 742h16v5l-2 1v5l-3 2h-6l-3-2v-5l-2-1z"/><circle cx="1141" cy="749.500" r="3.600" fill="#fff" stroke="none"/><path d="M1141 747.500v3" stroke="#222"/>
    <path fill="#fff" stroke="none" d="M1158 741.500q5 0 7.500-1.500 2.500 1.500 7.500 1.500v6q0 5-7.500 8-7.500-3-7.500-8z"/><path d="M1158 747.500h15M1165.500 740v15" stroke="#222"/><path fill="#f7c331" stroke="none" d="M1168.500 747l5 9h-10z"/><path d="M1168.500 750v3.500M1168.500 754.500v1" stroke="#222"/>
    <path d="M1184.500 744.500h11v8h-11z"/><path fill="#fff" stroke="none" d="M1187 746h7v5h-7zM1196 747h1.500v3h-1.500z"/><path fill="#fff" stroke="#1d1d1d" stroke-width=".6" d="M1181.500 743h6v3q-3 4-6 0z"/><path d="M1183 741v3M1186 741v3M1184.500 747v4"/>
    <g stroke="#999"><path d="M1208.500 753q0-9 10-11M1211.500 754q0-7 7.500-8.500M1214.500 754.500q0-4 4.500-5.500"/></g><circle cx="1218.500" cy="753.500" r="1.500" fill="#fff" stroke="none"/>
    <path d="M1229.500 745.500h3l3.500-3.500v12l-3.500-3.500h-3z"/><path d="M1238 745.500q2 2.500 0 5"/><path d="M1240.500 743.500q3 4.500 0 9M1243 742q3.500 6 0 12" stroke="#777"/>
    <path d="M1325.500 740.500h15v12h-4l-3 3.500v-3.500h-8z" stroke-width="1.300"/><path d="M1361.500 728v40" stroke="#777"/>
  </svg>
  <div class="clock"><div>4:50 PM</div><div>12/20/2022</div></div>
</footer>
</body>
</html>
```
FILE: styles.css
```css
* { box-sizing: border-box; }
body { margin: 0; width: 1366px; height: 768px; overflow: hidden; display: flex; flex-direction: column; font: 11px "Liberation Sans", Arial, sans-serif; color: #333; background: #f1f1f1; }
svg { display: block; flex: none; }
.defs { position: absolute; width: 0; height: 0; }
.caret { display: inline-block; border: 3.5px solid transparent; border-top: 4.5px solid #333; border-bottom: 0; }

.titlebar { height: 23px; background: #fff; display: flex; align-items: center; flex: none; }
.applogo { width: 15px; height: 17px; margin-left: 3px; font-family: "Open Sans", sans-serif; }
.apptitle { margin-left: 5px; font: 12px "Open Sans", "Noto Sans", sans-serif; letter-spacing: -.3px; color: #000; }
.winbtns { width: 110px; height: 20px; margin: -3px 16px 0 auto; }

.tabbar { height: 32px; background: #cbcbcb; display: flex; align-items: flex-end; flex: none; width: 1364px; }
.quick { width: 193px; height: 32px; padding-left: 9px; display: flex; align-items: center; }
.quick .caret { border-width: 4.5px 3.5px 0; }
.q-file { margin-left: 19px; }
.c1 { margin: -1px 0 0 6px; border-top-color: #595959; }
.q-save { margin-left: 20px; }
.q-undo { margin-left: 19px; }
.q-redo { margin-left: 13px; }
.c2 { margin: -1px 0 0 6px; border-top-color: #808080; }
.doctab { width: 958px; height: 28px; background: #f1f1f1; border-radius: 3px 3px 0 0; display: flex; align-items: center; padding-left: 389px; font-size: 12px; }
.doctab span { margin: 1px 0 0 4px; letter-spacing: .03px; }
.tabclose { margin: 0 7px 0 auto; }
.plus { width: 28px; height: 28px; margin-left: 4px; background: #b9b9b9; border-radius: 3px 3px 0 0; display: flex; align-items: center; justify-content: center; padding-bottom: 1px; }
.status { height: 32px; display: flex; align-items: center; gap: 17px; margin-left: 12px; }
.avatar { margin: 0 0 4px 19px; }

.ribbon { height: 84px; border-bottom: 2px solid #e0e0e0; background: #f1f1f1; display: flex; flex: none; padding-left: 11px; width: 1364px; font-family: Roboto, sans-serif; }
.design { width: 111px; height: 62px; margin: 10px 3px 0 0; border: 2px solid #dedede; border-radius: 4px; display: flex; align-items: center; justify-content: center; gap: 5px; font-weight: 700; letter-spacing: .1px; }
.tools { display: flex; flex-direction: column; }
.tabs { height: 24px; display: flex; padding-left: 25px; line-height: 23px; letter-spacing: -.2px; }
.tabs .on { color: #0696d7; font-weight: 700; margin-left: -12px; padding-left: 13px; border-bottom: 3px solid #0696d7; height: 24px; letter-spacing: 0; }
.t1 { width: 57px; margin-right: 33px; }
.t2 { width: 93px; }
.t3 { width: 73px; }
.t4 { width: 113px; }
.t5 { width: 88px; }
.groups { display: flex; height: 56px; padding-top: 2px; }
.group { height: 53px; border-right: 2px solid #dedede; display: flex; flex-direction: column; align-items: center; }
.group:last-child { border-right: 0; }
.icons { height: 34px; display: flex; align-items: center; gap: 11px; padding-left: 2px; }
.icons svg { width: 32px; height: 32px; }
.icons .big { width: 38px; height: 38px; margin-right: 2px; }
.label { margin-top: 6px; height: 13px; line-height: 13px; display: flex; align-items: center; gap: 3px; letter-spacing: -.2px; }
.label .caret { margin-top: -2px; }
.g-create { width: 270px; }
.g-auto { width: 94px; }
.g-modify { width: 269px; }
.g-modify .label { margin-right: 2px; }
.g-asm { width: 97px; }
.g-con { width: 99px; }
.g-ins { width: 79px; }
.g-ins .icons { padding-left: 0; }
.g-insert { width: 97px; }
.g-sel { width: 75px; }

.stage { height: 535px; background: #fff; position: relative; flex: none; }
.scene { position: absolute; inset: 0; width: 1366px; height: 535px; }
.cubetext { font: 700 9.5px Roboto, sans-serif; fill: #8d9197; text-anchor: middle; }
.axis { font: 700 10px Roboto, sans-serif; text-anchor: middle; }
.axis.z { fill: #8d8af0; }
.axis.y { fill: #83f083; }

.browser { position: absolute; left: 4px; top: 4px; width: 300px; }
.panelhead { width: 300px; height: 25px; border: 1px solid #c5c5c5; background: #f1f1f1; display: flex; align-items: center; padding-left: 4px; font-family: Roboto, sans-serif; color: #555; }
.panelhead span { margin-left: 9px; letter-spacing: .18px; }
.ctl { margin-left: auto; }
.node { height: 24px; display: flex; align-items: center; padding-left: 36px; }
.root { padding-left: 17px; margin-top: 3px; }
.tri { width: 9px; height: 14px; }
.chip { height: 20px; background: #f1f1f1; margin-left: 9px; padding-left: 3px; display: flex; align-items: center; }
.chip span { margin-left: 14px; white-space: nowrap; letter-spacing: -.13px; }
.chip .wide { letter-spacing: .1px; }
.root .chip { width: 236px; margin-left: 7px; }
.root b { width: 186px; height: 16px; background: #999; color: #fff; margin-left: 6px; padding-left: 3px; display: flex; align-items: center; gap: 14px; white-space: nowrap; }
.root em { font-style: normal; letter-spacing: .12px; }
.radio { margin-left: 4px; }
.dim { color: #999; }
.second { margin-left: 9px; }
.w1 { width: 134px; }
.w2 { width: 110px; }
.w3 { width: 95px; }
.w4 { width: 111px; }
.w5 { width: 107px; }
.comments { position: absolute; left: 4px; top: 506px; border-top: 0; padding-left: 15px; }
.comments span { letter-spacing: -.35px; }
.navbar { position: absolute; left: 564px; top: 507px; width: 237px; height: 24px; }

.timeline { height: 54px; border-top: 1px solid #d9d9d9; display: flex; flex: none; }
.playback { width: 115px; height: 18px; margin: 15px 0 0 10px; }
.track { position: relative; display: flex; margin: 11px 0 0 17px; height: 31px; }
.track i { width: 24px; height: 24px; padding: 4px; border-radius: 2px; position: relative; }
.track i svg { width: 16px; height: 16px; overflow: visible; }
.track i::after { content: ""; position: absolute; left: 12px; top: 23px; width: 24px; height: 6px; border-left: 2px solid #c6c6c6; border-bottom: 2px solid #c6c6c6; }
.track i:nth-of-type(49)::after { width: 2px; border-bottom: 0; }
.track .hl { background: #e6e622; }
.track .off svg { opacity: .22; }
.marker { position: absolute; left: 1002px; top: -2px; width: 12px; height: 32px; }
.cog { margin: 16px 13px 0 auto; color: #8b8b8b; }

.taskbar { height: 40px; background: #1d1d1d; display: flex; flex: none; font-family: "Open Sans", sans-serif; }
.app { width: 49px; height: 40px; display: flex; align-items: center; justify-content: center; }
.app.s { width: 48px; }
.app.s2 { width: 49px; margin-right: 1px; }
.app.run { background: linear-gradient(90deg, #9bd0fa 31px, #7199b7 31px) 5px 38px / 40px 2px no-repeat; }
.app.active { width: 48px; margin-left: 1px; background: #4a4a4a; border-bottom: 2px solid #9bd0fa; }
.ini { font: 7px "Open Sans", sans-serif; fill: #fff; text-anchor: middle; }
.off-l { font: 700 10.5px "Open Sans", sans-serif; fill: #fff; text-anchor: middle; }
.ps { font: 700 12px "Open Sans", sans-serif; fill: #35c5f4; text-anchor: middle; }
.tray { width: 288px; height: 40px; }
.clock { width: 74px; margin: 2px 0 0 -121px; color: #fff; font-size: 12px; line-height: 18px; text-align: center; letter-spacing: -.45px; }
```
